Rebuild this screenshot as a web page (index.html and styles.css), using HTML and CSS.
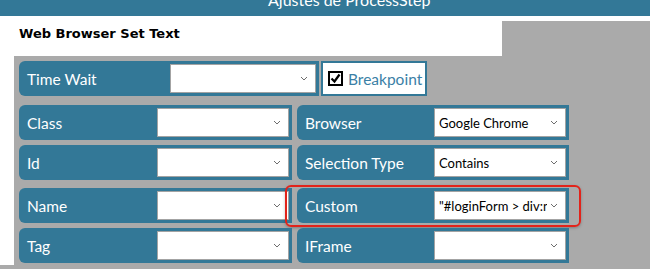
FILE: index.html
```html
<!DOCTYPE html>
<html lang="es">
<head>
    <meta charset="UTF-8">
    <title>Ajustes de ProcessStep</title>
    <link rel="stylesheet" href="styles.css">
</head>
<body>
    <div class="titlebar"><span>Ajustes de ProcessStep</span></div>

    <div class="window">
        <div class="heading">Web Browser Set Text</div>

        <div class="form-area">
            <div class="top-row">
                <div class="field field-wide">
                    <span class="label">Time Wait</span>
                    <div class="combo"><span class="value"></span><svg class="chev" width="8" height="5" viewBox="0 0 8 5"><path d="M1 1l3 3 3-3" fill="none" stroke="#6d6d6d" stroke-width="1"/></svg></div>
                </div>
                <label class="breakpoint">
                    <span class="check"><svg width="11" height="11" viewBox="0 0 11 11"><path d="M1.5 5.5l3 3 5-7" fill="none" stroke="#000" stroke-width="2.2"/></svg></span>
                    <span>Breakpoint</span>
                </label>
            </div>

            <div class="grid">
                <div class="field row-a">
                    <span class="label">Class</span>
                    <div class="combo"><span class="value"></span><svg class="chev" width="8" height="5" viewBox="0 0 8 5"><path d="M1 1l3 3 3-3" fill="none" stroke="#6d6d6d" stroke-width="1"/></svg></div>
                </div>
                <div class="field row-a">
                    <span class="label">Browser</span>
                    <div class="combo"><span class="value">Google Chrome</span><svg class="chev" width="8" height="5" viewBox="0 0 8 5"><path d="M1 1l3 3 3-3" fill="none" stroke="#6d6d6d" stroke-width="1"/></svg></div>
                </div>

                <div class="field row-b">
                    <span class="label">Id</span>
                    <div class="combo"><span class="value"></span><svg class="chev" width="8" height="5" viewBox="0 0 8 5"><path d="M1 1l3 3 3-3" fill="none" stroke="#6d6d6d" stroke-width="1"/></svg></div>
                </div>
                <div class="field row-b">
                    <span class="label">Selection Type</span>
                    <div class="combo"><span class="value">Contains</span><svg class="chev" width="8" height="5" viewBox="0 0 8 5"><path d="M1 1l3 3 3-3" fill="none" stroke="#6d6d6d" stroke-width="1"/></svg></div>
                </div>

                <div class="field row-c">
                    <span class="label">Name</span>
                    <div class="combo"><span class="value"></span><svg class="chev" width="8" height="5" viewBox="0 0 8 5"><path d="M1 1l3 3 3-3" fill="none" stroke="#6d6d6d" stroke-width="1"/></svg></div>
                </div>
                <div class="field row-c highlighted">
                    <span class="label">Custom</span>
                    <div class="combo"><span class="value">"#loginForm &gt; div:nth-child(1)"</span><svg class="chev" width="8" height="5" viewBox="0 0 8 5"><path d="M1 1l3 3 3-3" fill="none" stroke="#6d6d6d" stroke-width="1"/></svg></div>
                    <div class="mark"></div>
                </div>

                <div class="field">
                    <span class="label">Tag</span>
                    <div class="combo"><span class="value"></span><svg class="chev" width="8" height="5" viewBox="0 0 8 5"><path d="M1 1l3 3 3-3" fill="none" stroke="#6d6d6d" stroke-width="1"/></svg></div>
                </div>
                <div class="field">
                    <span class="label">IFrame</span>
                    <div class="combo"><span class="value"></span><svg class="chev" width="8" height="5" viewBox="0 0 8 5"><path d="M1 1l3 3 3-3" fill="none" stroke="#6d6d6d" stroke-width="1"/></svg></div>
                </div>
            </div>
        </div>
    </div>
</body>
</html>
```

FILE: styles.css
```css
body {
    margin: 0;
    background-color: #fff;
    font-family: Lato, "Open Sans", sans-serif;
    overflow: hidden;
}
.titlebar {
    height: 16px;
    background-color: #337897;
    overflow: hidden;
}
.titlebar span {
    display: block;
    padding-left: 268px;
    margin-top: -10px;
    color: #fff;
    font-size: 16px;
    line-height: 20px;
}
.window {
    background-color: #aaa;
    border-top: 5px solid #fff;
    border-bottom: 4px solid #aaa;
}
.heading {
    background-color: #fff;
    width: 502px;
    height: 40px;
    margin-top: -5px;
    padding-left: 19px;
    padding-top: 11px;
    box-sizing: border-box;
    font-family: "DejaVu Sans", sans-serif;
    font-weight: bold;
    font-size: 13px;
    line-height: 14px;
    color: #000;
}
.form-area {
    border-left: 14px solid #fff;
    padding: 5px 0 3px 5px;
    height: 209px;
    box-sizing: border-box;
}
.top-row {
    display: flex;
    gap: 2px;
    margin-bottom: 9px;
}
.grid {
    display: grid;
    grid-template-columns: 273px 272px;
    column-gap: 5px;
}
.field {
    position: relative;
    display: flex;
    align-items: center;
    height: 35px;
    box-sizing: border-box;
    padding: 3px 3px 3px 8px;
    background-color: #337897;
    border-radius: 6px 0 0 6px;
    margin-bottom: 5px;
}
.field.row-b {
    margin-bottom: 8px;
}
.field-wide {
    width: 300px;
    margin-bottom: 0;
}
.label {
    flex: 1;
    color: #fff;
    font-size: 15.5px;
}
.combo {
    width: 132px;
    height: 29px;
    box-sizing: border-box;
    background-color: #fff;
    border: 1px solid #a3a3a3;
    display: flex;
    align-items: center;
    padding: 0 7px 0 4px;
    gap: 3px;
}
.field-wide .combo {
    width: 146px;
}
.value {
    flex: 1;
    font-size: 13px;
    color: #000;
    white-space: nowrap;
    overflow: hidden;
}
.chev {
    flex: none;
}
.breakpoint {
    display: flex;
    align-items: center;
    gap: 5px;
    width: 106px;
    height: 35px;
    box-sizing: border-box;
    background-color: #fff;
    border: 2px solid #337897;
    padding-left: 5px;
    color: #3b7fa6;
    font-size: 15.5px;
}
.check {
    width: 15px;
    height: 15px;
    box-sizing: border-box;
    border: 2px solid #000;
    display: flex;
    align-items: center;
    justify-content: center;
}
.check svg {
    display: block;
}
.mark {
    position: absolute;
    left: -12px;
    top: -3px;
    width: 296px;
    height: 42px;
    box-sizing: border-box;
    border: 2px solid #e2231a;
    border-radius: 6px;
    box-shadow: 0 1px 3px rgba(0, 0, 0, 0.25);
}
```
